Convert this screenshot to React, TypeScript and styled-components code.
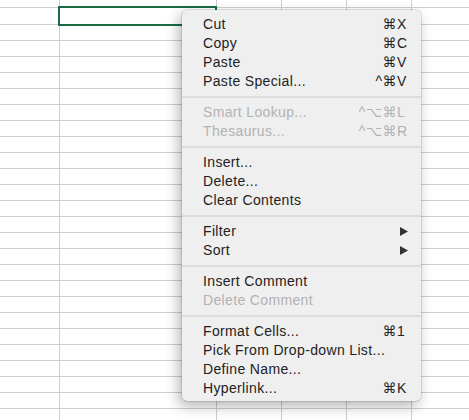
import React from 'react'
import styled, { createGlobalStyle } from 'styled-components'

const GlobalStyle = createGlobalStyle`
  html, body {
    margin: 0;
    padding: 0;
    background: #ffffff;
    overflow: hidden;
  }
  body {
    font-family: "Liberation Sans", "DejaVu Sans", Arial, sans-serif;
  }
`

const COLUMN_WIDTHS = [60, 157, 65, 65, 65, 65]
const ROW_HEIGHTS = [8, 17, ...Array(25).fill(16)]

const Page = styled.div`
  position: relative;
  width: 469px;
  height: 420px;
  overflow: hidden;
`

const Sheet = styled.div`
  display: flex;
  flex-direction: column;
`

const SheetRow = styled.div<{ $h: number }>`
  display: flex;
  height: ${({ $h }) => $h}px;
  flex-shrink: 0;
`

const Cell = styled.div<{ $w: number }>`
  width: ${({ $w }) => $w}px;
  flex-shrink: 0;
  box-sizing: border-box;
  border-right: 1px solid #cfcfcf;
  border-bottom: 1px solid #cfcfcf;
`

const Selection = styled.div`
  position: absolute;
  left: 58px;
  top: 6px;
  width: 159px;
  height: 20px;
  box-sizing: border-box;
  border: 2px solid #1b6b45;
`

const Menu = styled.div`
  position: absolute;
  left: 182px;
  top: 10px;
  width: 239px;
  box-sizing: border-box;
  padding: 4.5px 0 3.5px;
  background: #efefef;
  border-radius: 5px;
  box-shadow: 0 0 0 0.5px rgba(0, 0, 0, 0.2), -3px 5px 14px rgba(0, 0, 0, 0.3);
  font-size: 14px;
  letter-spacing: 0.35px;
`

const Item = styled.div<{ $disabled?: boolean }>`
  display: flex;
  align-items: center;
  justify-content: space-between;
  height: 19px;
  padding: 0 12px 0 21px;
  color: ${({ $disabled }) => ($disabled ? '#b2b2b2' : '#222222')};
  white-space: nowrap;
`

const Shortcut = styled.span`
  display: flex;
  align-items: center;
`

const Mods = styled.span`
  text-align: right;
  letter-spacing: 0.5px;
`

const Key = styled.span`
  width: 12px;
  text-align: left;
  letter-spacing: 0;
`

const Arrow = styled.svg`
  width: 8px;
  height: 9px;
  margin-right: 1px;
`

const Separator = styled.div`
  height: 2px;
  margin: 5px 0;
  background: #dcdcdc;
`

type Entry = { label: string; mods?: string; key?: string; sub?: boolean; disabled?: boolean }

const GROUPS: Entry[][] = [
  [
    { label: 'Cut', mods: '⌘', key: 'X' },
    { label: 'Copy', mods: '⌘', key: 'C' },
    { label: 'Paste', mods: '⌘', key: 'V' },
    { label: 'Paste Special...', mods: '^⌘', key: 'V' },
  ],
  [
    { label: 'Smart Lookup...', mods: '^⌥⌘', key: 'L', disabled: true },
    { label: 'Thesaurus...', mods: '^⌥⌘', key: 'R', disabled: true },
  ],
  [{ label: 'Insert...' }, { label: 'Delete...' }, { label: 'Clear Contents' }],
  [
    { label: 'Filter', sub: true },
    { label: 'Sort', sub: true },
  ],
  [{ label: 'Insert Comment' }, { label: 'Delete Comment', disabled: true }],
  [
    { label: 'Format Cells...', mods: '⌘', key: '1' },
    { label: 'Pick From Drop-down List...' },
    { label: 'Define Name...' },
    { label: 'Hyperlink...', mods: '⌘', key: 'K' },
  ],
]

const MenuItem = ({ entry }: { entry: Entry }) => (
  <Item $disabled={entry.disabled}>
    <span>{entry.label}</span>
    {entry.key && (
      <Shortcut>
        <Mods>{entry.mods}</Mods>
        <Key>{entry.key}</Key>
      </Shortcut>
    )}
    {entry.sub && (
      <Arrow viewBox="0 0 8 9">
        <polygon points="0,0 8,4.5 0,9" fill="#333333" />
      </Arrow>
    )}
  </Item>
)

const App = () => (
  <Page>
    <GlobalStyle />
    <Sheet>
      {ROW_HEIGHTS.map((h, r) => (
        <SheetRow key={r} $h={h}>
          {COLUMN_WIDTHS.map((w, c) => (
            <Cell key={c} $w={w} />
          ))}
        </SheetRow>
      ))}
    </Sheet>
    <Selection />
    <Menu>
      {GROUPS.map((group, g) => (
        <React.Fragment key={g}>
          {g > 0 && <Separator />}
          {group.map((entry) => (
            <MenuItem key={entry.label} entry={entry} />
          ))}
        </React.Fragment>
      ))}
    </Menu>
  </Page>
)

export default App
